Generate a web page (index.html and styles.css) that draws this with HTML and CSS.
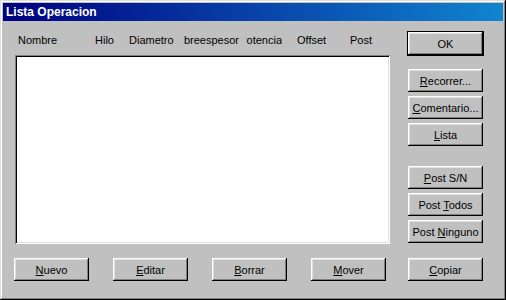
FILE: index.html
```html
<!DOCTYPE html>
<html lang="es">

<head>
	<meta charset="UTF-8">
	<title>Lista Operacion</title>
	<link rel="stylesheet" href="styles.css">
</head>

<body>
	<div class="window">
		<div class="titlebar">Lista Operacion</div>
		<div class="main">
			<div class="left">
				<div class="header">
					<span class="col col-nombre">Nombre</span>
					<span class="col col-hilo">Hilo</span>
					<span class="col col-diametro">Diametro</span>
					<span class="col col-sobre"><span class="clip clip-sobre">Sobreespesor</span></span>
					<span class="col col-potencia"><span class="clip clip-potencia">Potencia</span></span>
					<span class="col col-offset">Offset</span>
					<span class="col col-post">Post</span>
				</div>
				<div class="listbox"></div>
			</div>
			<div class="side">
				<button type="button" class="btn btn-default">OK</button>
				<button type="button" class="btn btn-first"><u>R</u>ecorrer...</button>
				<button type="button" class="btn"><u>C</u>omentario...</button>
				<button type="button" class="btn"><u>L</u>ista</button>
				<button type="button" class="btn btn-group"><u>P</u>ost S/N</button>
				<button type="button" class="btn">Post <u>T</u>odos</button>
				<button type="button" class="btn">Post <u>N</u>inguno</button>
			</div>
		</div>
		<div class="bottom">
			<button type="button" class="btn"><u>N</u>uevo</button>
			<button type="button" class="btn"><u>E</u>ditar</button>
			<button type="button" class="btn"><u>B</u>orrar</button>
			<button type="button" class="btn"><u>M</u>over</button>
			<button type="button" class="btn btn-copiar"><u>C</u>opiar</button>
		</div>
	</div>
</body>

</html>
```

FILE: styles.css
```css
body
{
	margin: 0;
	font-family: 'Liberation Sans', Arial, sans-serif;
	font-size: 11px;
	color: #000;
	background-color: #c0c0c0;
}

.window
{
	width: 506px;
	height: 300px;
	box-sizing: border-box;
	padding: 3px;
	background-color: #c0c0c0;
	box-shadow: inset -1px -1px #000, inset 1px 1px #dfdfdf, inset -2px -2px #808080, inset 2px 2px #fff;
}

.titlebar
{
	height: 18px;
	line-height: 18px;
	padding-left: 3px;
	color: #fff;
	font-weight: bold;
	font-size: 12px;
	background: linear-gradient(to right, #000080, #1084d0);
}

.main
{
	display: flex;
	align-items: flex-start;
}

.left
{
	margin-left: 12px;
	margin-top: 13px;
}

.header
{
	display: flex;
	height: 13px;
	line-height: 13px;
	padding-left: 3px;
	margin-bottom: 8px;
}

.col
{
	flex: none;
	white-space: nowrap;
}

.col-nombre { width: 77px; }
.col-hilo { width: 34px; }
.col-diametro { width: 55px; }
.col-sobre { width: 62px; }
.col-potencia { width: 51px; }
.col-offset { width: 53px; }

.clip
{
	display: flex;
	justify-content: flex-end;
	overflow: hidden;
}

.clip-sobre
{
	width: 55px;
}

.clip-potencia
{
	width: 36px;
}

.listbox
{
	width: 375px;
	height: 189px;
	box-sizing: border-box;
	background-color: #fff;
	box-shadow: inset 1px 1px #808080, inset -1px -1px #fff, inset 2px 2px #000, inset -2px -2px #dfdfdf;
}

.side
{
	display: flex;
	flex-direction: column;
	gap: 4px;
	margin-left: 17px;
	margin-top: 10px;
}

.btn
{
	width: 75px;
	height: 23px;
	padding: 0;
	border: none;
	font-family: inherit;
	font-size: 11px;
	color: #000;
	background-color: #c0c0c0;
	box-shadow: inset -1px -1px #000, inset 1px 1px #fff, inset -2px -2px #808080, inset 2px 2px #dfdfdf;
	flex: none;
}

.side .btn
{
	margin-left: 1px;
}

.side .btn-default
{
	width: 77px;
	height: 25px;
	margin-left: 0;
	border: 1px solid #000;
}

.side .btn-first
{
	margin-top: 9px;
}

.side .btn-group
{
	margin-top: 16px;
}

.bottom
{
	display: flex;
	gap: 24px;
	margin-top: 14px;
	padding-left: 11px;
}

.bottom .btn-copiar
{
	margin-left: -2px;
}
```
